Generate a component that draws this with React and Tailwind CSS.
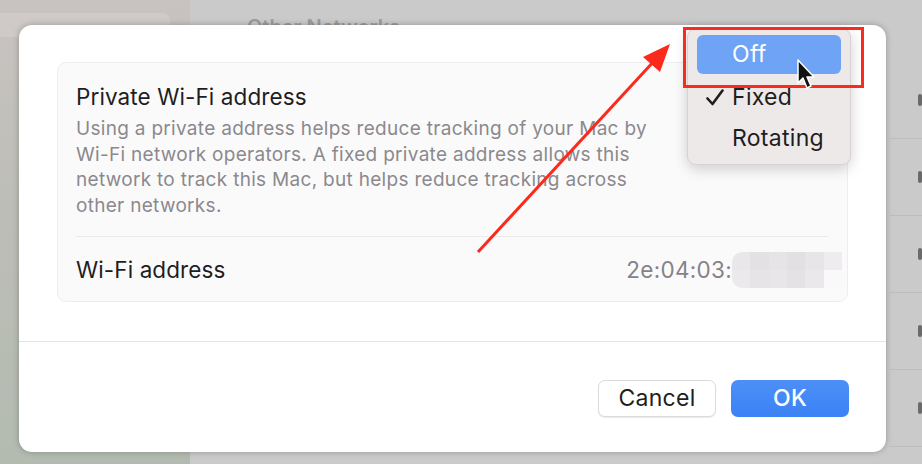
import React from 'react';

const font = { fontFamily: 'Inter, "Open Sans", "Liberation Sans", sans-serif' };

function Backdrop() {
    return (
        <div className="absolute inset-0 flex">
            <div className="w-[190px] flex flex-col bg-gradient-to-b from-[#c8c3c1] via-[#bcbdb6] to-[#b3bbb0]">
                <div className="mt-[13px] mr-[20px] h-[24px] rounded-r-lg bg-[#cfc9c7]" />
            </div>
            <div className="flex-1 bg-[#cacaca] relative">
                <div className="pl-[57px] pt-[12px] text-[20px] font-semibold text-[#9c9c9c]">Other Networks</div>
                <div className="absolute right-0 top-0 bottom-0 w-[32px] flex flex-col">
                    {[0, 1, 2, 3, 4].map((i) => (
                        <div key={i} className="h-[77px] border-b border-[#bdbdbd] flex items-center justify-end first:mt-[62px]">
                            <div className="w-[4px] h-[12px] rounded-sm bg-[#6a6a6a]" />
                        </div>
                    ))}
                </div>
            </div>
        </div>
    );
}

function Dialog() {
    return (
        <div className="absolute left-[19px] top-[25px] w-[867px] h-[427px] bg-white rounded-[13px] shadow-[0_0_6px_rgba(0,0,0,0.25)] flex flex-col">
            <div className="px-[38px] pt-[37px] h-[316px]">
                <div className="h-[240px] rounded-[9px] bg-[#fbfafb] border border-[#efedef] px-[18px] pt-[20px]">
                    <div className="text-[22.5px] leading-[28px] tracking-[0.1px] text-[#1e1e1e]">Private Wi-Fi address</div>
                    <p className="mt-[5px] text-[19px] leading-[25.7px] tracking-[0.3px] text-[#8b898d] whitespace-nowrap">
                        Using a private address helps reduce tracking of your Mac by<br />
                        Wi-Fi network operators. A fixed private address allows this<br />
                        network to track this Mac, but helps reduce tracking across<br />
                        other networks.
                    </p>
                    <div className="mt-[17px] mr-[1px] h-px bg-[#ebe9eb]" />
                    <div className="h-[66px] flex items-center justify-between">
                        <span className="text-[22.5px] tracking-[0.1px] text-[#1e1e1e]">Wi-Fi address</span>
                        <div className="flex items-center -mr-[13px]">
                            <span className="text-[22.5px] tracking-[0.3px] text-[#858387]">2e:04:03:</span>
                            <div className="w-[110px] h-[36px] grid grid-cols-6 grid-rows-2 rounded-l-[10px] overflow-hidden">
                                <div className="bg-[#e9e7e9]" /><div className="bg-[#e3e1e3]" /><div className="bg-[#e6e4e6]" /><div className="bg-[#e2e0e2]" /><div className="bg-[#e7e5e7]" /><div className="bg-[#eeecee]" />
                                <div className="bg-[#ebe9eb]" /><div className="bg-[#e6e4e6]" /><div className="bg-[#e8e6e8]" /><div className="bg-[#e4e2e4]" /><div className="bg-[#eae8ea]" /><div className="bg-[#faf9fa]" />
                            </div>
                        </div>
                    </div>
                </div>
            </div>
            <div className="h-px bg-[#e6e4e6]" />
            <div className="flex-1 flex justify-end items-start gap-[15px] px-[37px] pt-[38px]">
                <button className="w-[118px] h-[37px] rounded-[7px] bg-white border border-[#dcdadc] shadow-[0_1px_1px_rgba(0,0,0,0.08)] text-[23px] tracking-[0.3px] text-[#1e1e1e]">Cancel</button>
                <button className="w-[118px] h-[37px] rounded-[7px] bg-gradient-to-b from-[#4c8ff7] to-[#3b82f5] text-[23px] font-medium tracking-[0.3px] text-white">OK</button>
            </div>
        </div>
    );
}

function Menu() {
    return (
        <div className="absolute left-[687px] top-[28px] w-[164px] h-[137px] rounded-[9px] bg-[#eee9e9] border border-[#d8d3d3] shadow-[0_4px_14px_rgba(0,0,0,0.18)] px-[9px] pt-[6px]">
            <div className="h-[39px] rounded-[6px] bg-[#6fa3f5] text-white text-[23px] tracking-[0.3px] flex items-center pl-[35px]">Off</div>
            <div className="h-[46px] flex items-center text-[23px] tracking-[0.3px] text-[#1e1e1e]">
                <span className="w-[35px] pl-[9px] flex items-center">
                    <svg width="18" height="17" viewBox="0 0 18 17">
                        <path d="M1.5 9.5 L6.5 15 L16.5 1.5" fill="none" stroke="#1e1e1e" strokeWidth="2.6" strokeLinecap="round" strokeLinejoin="round" />
                    </svg>
                </span>
                Fixed
            </div>
            <div className="h-[36px] flex items-center text-[23px] tracking-[0.3px] text-[#1e1e1e] pl-[35px]">Rotating</div>
        </div>
    );
}

function Annotations() {
    return (
        <svg className="absolute inset-0 pointer-events-none" width="922" height="464" viewBox="0 0 922 464">
            <rect x="684.5" y="28.5" width="178" height="58" fill="none" stroke="#fb2a1c" strokeWidth="3" />
            <line x1="478" y1="252" x2="655" y2="60" stroke="#fb2a1c" strokeWidth="3" />
            <polygon points="670,44 660,72 643,57" fill="#fb2a1c" />
            <path d="M798 60 L798 83 L803 78 L807 88 L811 86 L807 77 L814 77 Z" fill="#111" stroke="#fff" strokeWidth="1.5" strokeLinejoin="round" />
        </svg>
    );
}

export default function App() {
    return (
        <div className="relative w-[922px] h-[464px] overflow-hidden" style={font}>
            <Backdrop />
            <Dialog />
            <Menu />
            <Annotations />
        </div>
    );
}
